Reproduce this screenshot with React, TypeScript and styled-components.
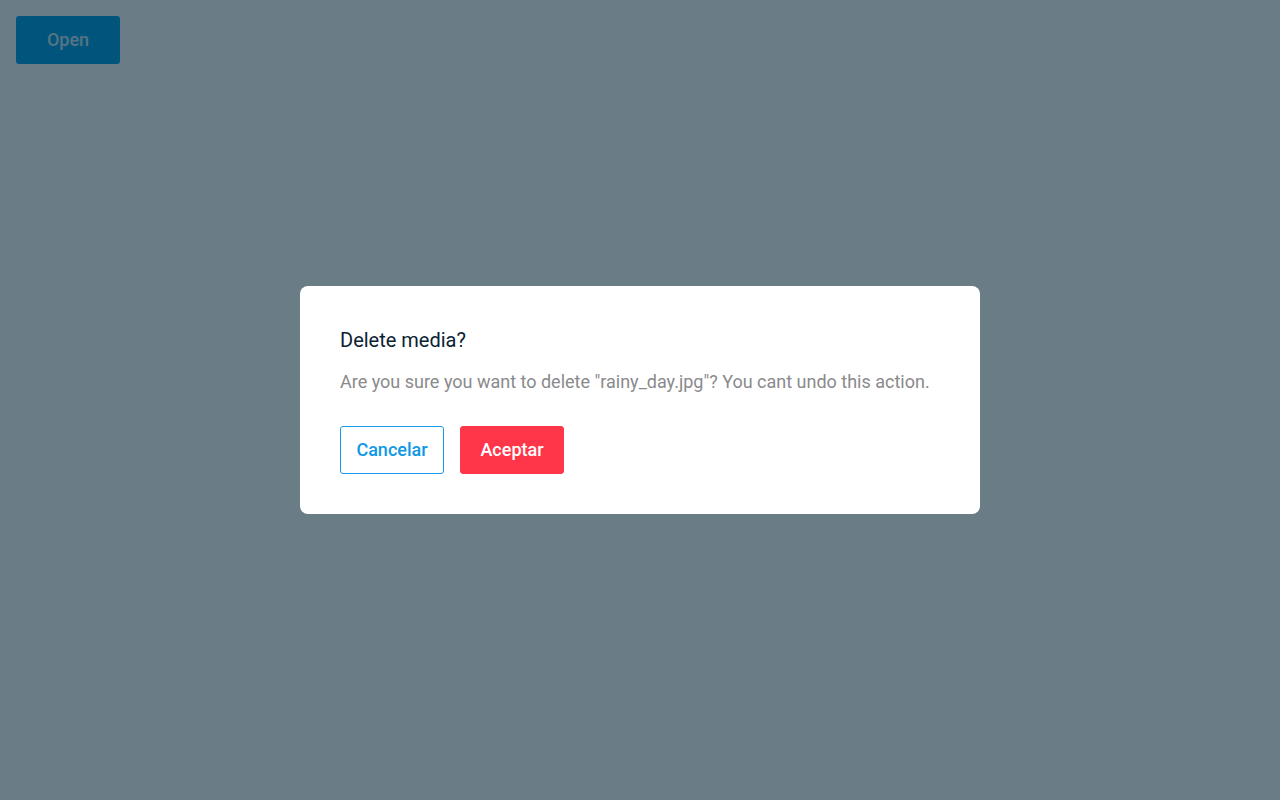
import React from "react";
import styled, { createGlobalStyle } from "styled-components";

const Global = createGlobalStyle`
  html, body { margin: 0; padding: 0; background: #ffffff; }
  body { font-family: Roboto, "Liberation Sans", Arial, sans-serif; }
  * { box-sizing: border-box; }
`;

const Page = styled.div`
  padding: 16px;
  min-height: 800px;
`;

const OpenButton = styled.button`
  width: 104px;
  height: 48px;
  padding: 0 0 2px;
  border: none;
  border-radius: 3px;
  background: #00a1e9;
  color: #cfe9f7;
  font-family: Roboto, "Liberation Sans", Arial, sans-serif;
  font-size: 18px;
  font-weight: 500;
  cursor: pointer;
`;

const Overlay = styled.div`
  position: fixed;
  inset: 0;
  background: rgba(2, 33, 50, 0.59);
  display: flex;
  align-items: center;
  justify-content: center;
`;

const Dialog = styled.div`
  width: 680px;
  background: #ffffff;
  border-radius: 8px;
  padding: 40px;
  display: flex;
  flex-direction: column;
`;

const Title = styled.h2`
  margin: 0;
  font-size: 20px;
  line-height: 28px;
  font-weight: 400;
  color: #0b2233;
`;

const Message = styled.p`
  margin: 14px 0 0;
  font-size: 18px;
  line-height: 28px;
  color: #8a8a8c;
`;

const Actions = styled.div`
  margin-top: 30px;
  display: flex;
  gap: 16px;
`;

const ActionButton = styled.button<{ $variant: "outline" | "danger" }>`
  width: 104px;
  height: 48px;
  padding: 0 0 2px;
  border-radius: 3px;
  font-family: Roboto, "Liberation Sans", Arial, sans-serif;
  font-size: 18px;
  font-weight: 500;
  cursor: pointer;
  border: 1px solid ${(p) => (p.$variant === "outline" ? "#1a9be8" : "#ff3549")};
  background: ${(p) => (p.$variant === "outline" ? "#ffffff" : "#ff3549")};
  color: ${(p) => (p.$variant === "outline" ? "#0e98e6" : "#ffffff")};
`;

export default function App() {
  return (
    <>
      <Global />
      <Page>
        <OpenButton>Open</OpenButton>
      </Page>
      <Overlay>
        <Dialog role="dialog">
          <Title>Delete media?</Title>
          <Message>
            Are you sure you want to delete "rainy_day.jpg"? You cant undo this action.
          </Message>
          <Actions>
            <ActionButton $variant="outline">Cancelar</ActionButton>
            <ActionButton $variant="danger">Aceptar</ActionButton>
          </Actions>
        </Dialog>
      </Overlay>
    </>
  );
}
